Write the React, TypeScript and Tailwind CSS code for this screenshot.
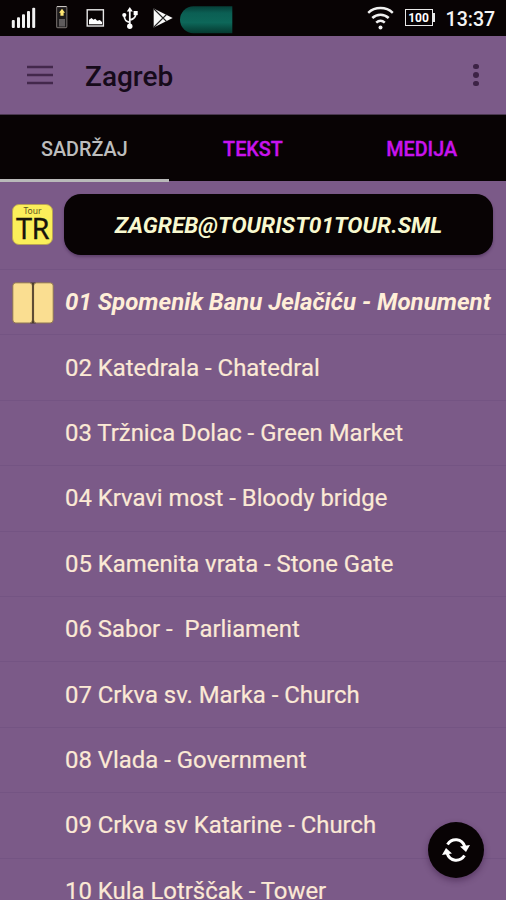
const items = [
  '02 Katedrala - Chatedral',
  '03 Tržnica Dolac - Green Market',
  '04 Krvavi most - Bloody bridge',
  '05 Kamenita vrata - Stone Gate',
  '06 Sabor -  Parliament',
  '07 Crkva sv. Marka - Church',
  '08 Vlada - Government',
  '09 Crkva sv Katarine - Church',
  '10 Kula Lotrščak - Tower',
]

function StatusBar() {
  return (
    <div className="h-[35.5px] shrink-0 bg-[#080304] flex items-start text-white">
      <svg className="w-[240px] h-[35px] shrink-0" viewBox="0 0 240 35">
        {/* Signal */}
        <g fill="#f2f2f2">
          <rect x="11.8" y="20" width="3" height="8" rx="1" />
          <rect x="17" y="17.3" width="3" height="10.7" rx="1" />
          <rect x="22" y="14.3" width="3" height="13.7" rx="1" />
          <rect x="27" y="11" width="3" height="17" rx="1" />
          <rect x="32.2" y="7.8" width="3" height="20.2" rx="1" />
        </g>

        {/* Phone battery */}
        <rect x="56.6" y="6.6" width="10.2" height="21" rx="1" fill="#1c1a1b" stroke="#67615f" strokeWidth="1.2" />
        <path d="M57 6.5h9.5" stroke="#c9c5c2" strokeWidth="1" />
        <path d="M62 8.7l3 4h-1.4v3h-3.2v-3H59z" fill="#ffe774" />
        <rect x="59" y="19" width="6" height="7.5" fill="#5f5b5c" />

        {/* Picture */}
        <rect x="87.2" y="9.8" width="16.2" height="16.2" fill="none" stroke="#e8e8e8" strokeWidth="1.4" />
        <path d="M89 24.3v-4.5l2.5-1.8 2 1.7 1.7-1 2 2 2.6-.8 2.2 2v2.4z" fill="#fff" />

        {/* USB */}
        <g fill="none" stroke="#f5f5f5" strokeWidth="1.8">
          <path d="M129.8 11v14M129.8 22.3c-4-.8-5.6-2.4-5.6-7M129.8 20c4-.8 6-2.4 6-6.5" />
        </g>
        <g fill="#fff">
          <path d="M129.8 7l3 4.5h-6z" />
          <circle cx="129.8" cy="26.2" r="2.7" />
          <circle cx="124.3" cy="15" r="2.1" />
          <rect x="133.6" y="11" width="4.1" height="4.1" />
        </g>

        {/* Play store */}
        <path d="M153.7 8.5l19 9.4-19 9.6z" fill="#fafafa" />
        <path d="M154 9l12.5 12.5M154 27l12.5-12.5" stroke="#222" strokeWidth="1.1" fill="none" />

        <defs>
          <linearGradient id="pill" x1="0" y1="0" x2="0" y2="1">
            <stop offset="0" stopColor="#063f38" />
            <stop offset=".25" stopColor="#0b5f54" />
            <stop offset=".6" stopColor="#0d6759" />
            <stop offset="1" stopColor="#05382f" />
          </linearGradient>
        </defs>
        <path d="M232.3 6.3V33.3H193.5a13.5 13.5 0 0 1 0-27z" fill="url(#pill)" />
      </svg>

      <svg className="ml-auto mr-[11px] mt-[6px] w-[27px] h-[25px] shrink-0" viewBox="0 0 27 25">
        <g fill="none" stroke="#f0f0f0" strokeWidth="2.5">
          <path d="M1.2 6.8C8 .5 19 .5 25.8 6.8" />
          <path d="M5.3 12C10 7.5 17 7.5 21.7 12" />
          <path d="M9.2 16.7c2.6-2.4 6-2.4 8.6 0" />
        </g>
        <circle cx="13.5" cy="21.5" r="2" fill="#f0f0f0" />
      </svg>
      <div className="mt-[9px] w-[28px] h-[17px] shrink-0 border-[1.5px] border-[#e8e8e8] flex items-center justify-center font-['Roboto'] font-bold text-[12px] leading-none">
        100
      </div>
      <div className="mt-[13px] w-[2px] h-[9px] bg-[#e8e8e8]" />
      <span className="ml-[11px] mr-[11.5px] mt-[8px] w-[49px] whitespace-nowrap font-['Roboto'] font-medium text-[19.6px] leading-6 text-[#f4f4f4]">
        13:37
      </span>
    </div>
  )
}

function AppBar() {
  return (
    <header className="h-[79px] shrink-0 flex items-center pl-[27px] pr-[27.5px] border-b border-[#4a3850]">
      <svg className="w-[26px] h-[20px]" viewBox="0 0 26 20">
        <path d="M0 2h26M0 10h26M0 18h26" stroke="#43284c" strokeWidth="2.3" />
      </svg>
      <h1 className="ml-8 mt-[5px] font-['Roboto'] font-medium text-[28px] leading-8 text-[#160a1a]">Zagreb</h1>
      <div className="ml-auto flex flex-col gap-[3px] mt-[1px]">
        <span className="size-[5.5px] rounded-full bg-[#3d2346]" />
        <span className="size-[5.5px] rounded-full bg-[#3d2346]" />
        <span className="size-[5.5px] rounded-full bg-[#3d2346]" />
      </div>
    </header>
  )
}

function Tabs() {
  return (
    <nav className="h-[66.5px] shrink-0 grid grid-cols-3 bg-[#080304] font-['Roboto'] font-medium text-[19.8px] text-center leading-[70px]">
      <span className="h-[67px] text-[#bdbdbd] border-b-[3px] border-[#b9b9b9]">SADRŽAJ</span>
      <span className="h-[66px] text-[#c813ee] [-webkit-text-stroke:0.3px_#c813ee]">TEKST</span>
      <span className="h-[66px] text-[#c813ee] [-webkit-text-stroke:0.3px_#c813ee]">MEDIJA</span>
    </nav>
  )
}

function TourIcon() {
  return (
    <div className="w-[41px] h-[41px] shrink-0 rounded-[7px] bg-[#fbef5a] border border-[#b9a354] flex flex-col items-center text-[#17150c] font-['Noto_Sans']">
      <span className="text-[8.5px] leading-[9px] mt-px text-[#5d5624]">Tour</span>
      <span className="text-[29px] leading-[26px] tracking-[-0.5px] [-webkit-text-stroke:0.3px_#17150c]">TR</span>
    </div>
  )
}

function BookIcon() {
  return (
    <svg className="w-[42px] h-[42px] shrink-0 mt-[2px]" viewBox="0 0 42 42">
      <path d="M18 .5h6L21.5 3v36l2.5 2.5h-6l2-2.5V3z" fill="#4a3c28" />
      <rect x=".8" y=".8" width="19.6" height="40.2" rx="3" fill="#fade91" stroke="#8d7453" />
      <rect x="21.6" y=".8" width="19.6" height="40.2" rx="3" fill="#fade91" stroke="#8d7453" />
      <path d="M21 2v38" stroke="#4a3c28" strokeWidth="1.4" />
    </svg>
  )
}

export default function App() {
  return (
    <div className="relative w-[506px] h-[900px] overflow-hidden flex flex-col bg-[#7b5a88]">
      <StatusBar />
      <AppBar />
      <Tabs />

      <div className="h-[89px] shrink-0 flex items-start pl-3 pr-[13px] border-b border-[#745483]">
        <div className="mt-[23px]">
          <TourIcon />
        </div>
        <button className="ml-[11px] mt-[13px] h-[61px] flex-1 rounded-[17px] bg-[#080304] shadow-[0_2px_3px_rgba(50,25,65,0.4)] pt-[3px] font-['Roboto'] font-bold italic text-[22.7px] text-[#f8f8cf] whitespace-nowrap">
          ZAGREB@TOURIST01TOUR.SML
        </button>
      </div>

      <div className="h-[65.4px] shrink-0 flex items-center pl-3 border-b border-[#745483] whitespace-nowrap font-['Roboto'] font-bold italic text-[24.05px] text-[#ffeed8]">
        <BookIcon />
        <span className="ml-[11px]">01 Spomenik Banu Jelačiću - Monument</span>
      </div>

      {items.map((item) => (
        <div
          key={item}
          className="h-[65.4px] shrink-0 flex items-center pt-[2px] pl-[65px] border-b border-[#745483] whitespace-pre font-['Roboto'] text-[23.9px] text-[#fbe9d5] [-webkit-text-stroke:0.2px_#fbe9d5]"
        >
          {item}
        </div>
      ))}

      {/* Refresh button */}
      <button className="absolute left-[428px] top-[822px] size-[56px] rounded-full bg-[#080304] shadow-[0_3px_6px_rgba(50,20,60,0.45)] flex items-center justify-center">
        <svg className="w-[30px] h-[26px]" viewBox="0 0 30 26">
          <g fill="none" stroke="#fff" strokeWidth="3">
            <path d="M6.5 7.5C11 .6 21 1 24 10" />
            <path d="M23.5 18.5C19 25.4 9 25 6 16" />
          </g>
          <path d="M19 9.5l10-1.5-4 7z" fill="#fff" />
          <path d="M11 16.5L1 18l4-7z" fill="#fff" />
        </svg>
      </button>
    </div>
  )
}
